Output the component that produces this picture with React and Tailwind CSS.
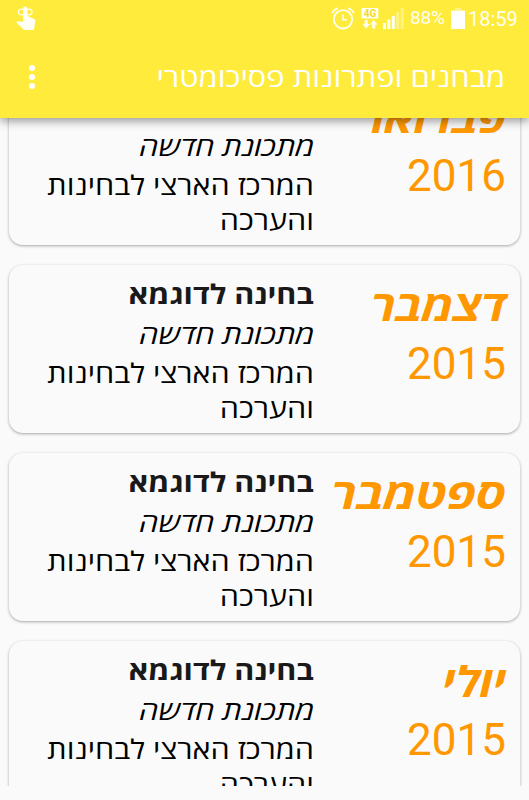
const exams = [
  { month: 'פברואר', year: '2016', stretch: 'scale-x-[1.1]' },
  { month: 'דצמבר', year: '2015', stretch: 'scale-x-[1.115]' },
  { month: 'ספטמבר', year: '2015', stretch: 'scale-x-[1.15]' },
  { month: 'יולי', year: '2015', stretch: 'scale-x-[1.115]' },
];

const hebrew = "font-['Open_Sans','Noto_Sans',sans-serif]";

function TouchIcon() {
  return (
    <svg className="-mt-px h-[25px] w-[20px]" viewBox="0 0 20 25" fill="#fffff5">
      <g fill="none" stroke="#fffff5" strokeWidth="1.3">
        <ellipse cx="5.5" cy="6" rx="3.2" ry="2.8" />
        <ellipse cx="12.8" cy="6" rx="3.2" ry="2.8" />
      </g>
      <path d="M7 2.6a2.2 2.2 0 0 1 4.4 0V10l7.2 3.2c.6.3.8.8.7 1.5L18.2 22.5c-.1.9-.6 1.5-1.5 1.5H9c-.6 0-1.2-.2-1.6-.7L.3 16.5l1-1c.4-.4.8-.4 1.3-.3L7 16.1Z" />
    </svg>
  );
}

function AlarmIcon() {
  return (
    <svg className="h-[23px] w-[24px]" viewBox="0 0 24 23" fill="none" stroke="#fffff0">
      <circle cx="12" cy="12.3" r="9.2" strokeWidth="1.9" />
      <path d="M12 7.5v5.3h4" strokeWidth="1.6" />
      <path d="M1 6Q2.8 2.5 6.8 1.2M23 6Q21.2 2.5 17.2 1.2" strokeWidth="1.8" />
    </svg>
  );
}

function DataIcon() {
  return (
    <svg className="h-[21px] w-[18px]" viewBox="0 0 18 21">
      <rect x="0.5" width="16.8" height="10.5" rx="1" fill="#fffff0" />
      <text x="9" y="8.8" textAnchor="middle" fill="#f3d92c" className="font-['Roboto',sans-serif] text-[10px] font-bold">4G</text>
      <path d="M3.7 12h3v4h2.2l-3.7 4.5L1.5 16h2.2ZM11.2 20.5h3v-4h2.3l-3.800-4.500L9 16.500h2.200Z" fill="#fffff0" />
    </svg>
  );
}

function SignalIcon() {
  return (
    <svg className="h-[21px] w-[21px]" viewBox="0 0 21 21" fill="#fffff0">
      <path d="M0 15h3v6H0ZM4.3 11.5h3V21h-3ZM8.8 8h3v13h-3Z" />
      <path d="M13.2 4h3v17h-3ZM17.7 0h3v21h-3Z" opacity=".4" />
    </svg>
  );
}

function BatteryIcon() {
  return (
    <svg className="h-[21px] w-[14px]" viewBox="0 0 14 21" fill="#fff">
      <path d="M4 0h6v2h4v1H0V2h4Z" opacity=".4" />
      <path d="M0 3h14v18H0Z" />
    </svg>
  );
}

function Card({ month, year, stretch }) {
  return (
    <article className="flex h-[168px] shrink-0 justify-between rounded-[14px] bg-[#fafafa] pt-[10px] pr-[14px] pl-9 shadow-[0_1px_3px_rgba(0,0,0,0.34)]">
      <div className="w-[175px] shrink-0 text-[#ff9800]">
        <div className={`${hebrew} ${stretch} h-[60px] origin-right text-[42px] leading-[59px] font-bold whitespace-nowrap italic`}>{month}</div>
        <div className="font-['Roboto',sans-serif] text-[44px] leading-[59px]">{year}</div>
      </div>
      <div className={`${hebrew} w-[269px] shrink-0 origin-right scale-x-[1.132] text-[27px] text-black`}>
        <div className="h-[39px] leading-[38px] font-bold text-[#191919]">בחינה לדוגמא</div>
        <div className="h-[41px] leading-[40px] italic">מתכונת חדשה</div>
        <div className="leading-[35px]">
          המרכז הארצי לבחינות
          <br />
          והערכה
        </div>
      </div>
    </article>
  );
}

export default function App() {
  return (
    <div dir="rtl" className="flex h-[800px] w-[529px] flex-col overflow-hidden bg-[#fafafa]">
      <header className="relative z-10 h-[118px] shrink-0 bg-[#ffeb3b] text-white shadow-[0_3px_9px_rgba(0,0,0,0.4)]">
        <div dir="ltr" className="flex h-[37px] items-center pl-4 font-['Roboto',sans-serif] text-[#fffff0]">
          <TouchIcon />
          <div className="ml-[295px] flex items-center">
            <AlarmIcon />
            <span className="ml-1.5"><DataIcon /></span>
            <span className="ml-1"><SignalIcon /></span>
            <span className="ml-1.5 w-[41px] text-[19px] tracking-[-0.2px] whitespace-nowrap">88%</span>
            <BatteryIcon />
            <span className="ml-[3px] text-[20px] whitespace-nowrap">18:59</span>
          </div>
        </div>
        <div className="flex h-[79px] items-center justify-between pr-[24px] pl-[29px]">
          <h1 className={`${hebrew} origin-right scale-x-[1.143] text-[27px] leading-10 whitespace-nowrap`}>מבחנים ופתרונות פסיכומטרי</h1>
          <div className="flex flex-col gap-[3px]">
            <span className="size-1.5 rounded-full bg-white" />
            <span className="size-1.5 rounded-full bg-white" />
            <span className="size-1.5 rounded-full bg-white" />
          </div>
        </div>
      </header>
      <main className="h-[668px] shrink-0 overflow-hidden">
        <div className="-mt-[41px] flex flex-col gap-5 px-[9px]">
          {exams.map((exam) => (
            <Card key={exam.month} {...exam} />
          ))}
        </div>
      </main>
    </div>
  );
}
